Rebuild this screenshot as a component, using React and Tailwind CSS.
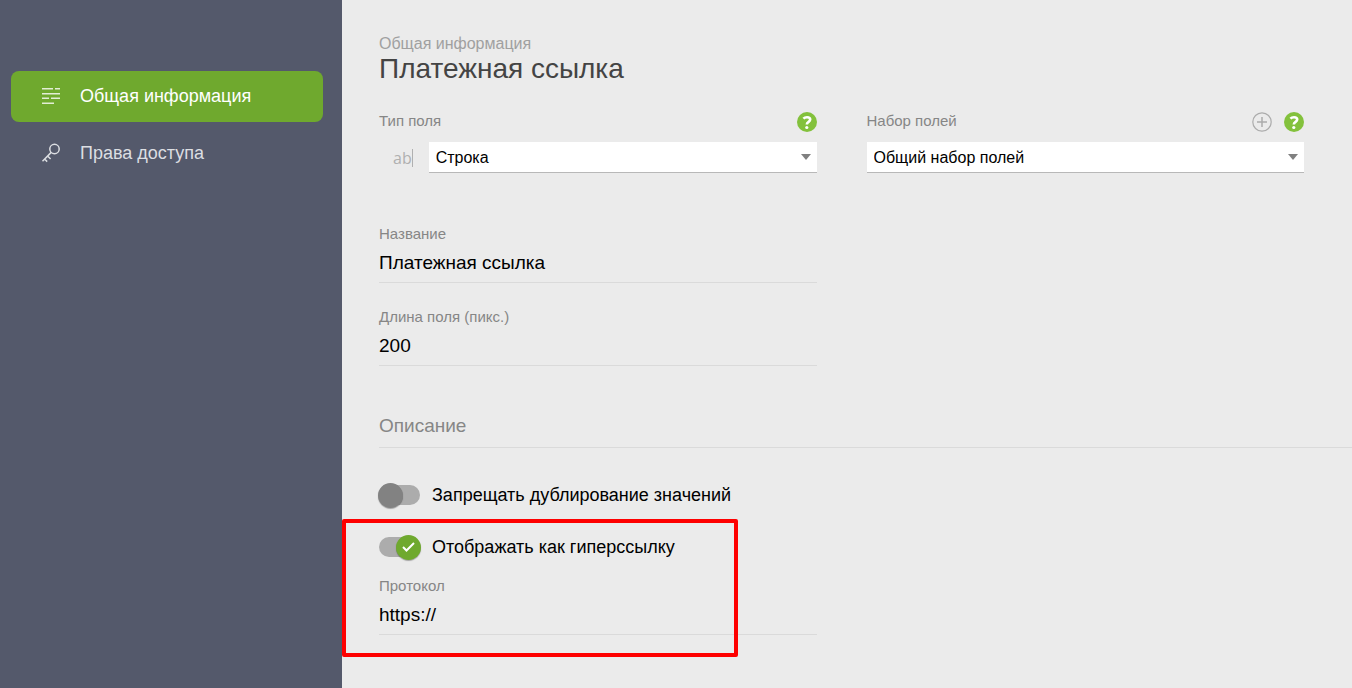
import { useState } from 'react';

const navItems = [
  { id: 'general', label: 'Общая информация', icon: LinesIcon },
  { id: 'access', label: 'Права доступа', icon: KeyIcon },
];

function LinesIcon() {
  return (
    <svg width="20" height="20" viewBox="0 0 20 20" fill="none" stroke="currentColor" strokeWidth="1.5" strokeOpacity="0.8" className="shrink-0">
      <path d="M1 2.7h11M14 2.7h5M1 7.7h18M1 12.2h7M10 12.2h9M1 17.2h12" />
    </svg>
  );
}

function KeyIcon() {
  return (
    <svg width="20" height="20" viewBox="0 0 20 20" fill="none" stroke="currentColor" strokeWidth="1.5" className="shrink-0">
      <circle cx="13.5" cy="6" r="4.7" />
      <path d="M10.2 9.4L1.5 18.2M6.6 13l3 3M3.6 16l2.6 2.6" />
    </svg>
  );
}

function HelpButton({ label }) {
  return (
    <button type="button" aria-label={label} className="size-5 rounded-full bg-[#83c13c]">
      <svg width="20" height="20" viewBox="0 0 20 20" fill="none" stroke="#fff" strokeWidth="2.6">
        <path d="M6.4 6.6C7.2 5.8 8.5 5.3 10 5.3c2 0 3.200.8 3.200 2.300 0 2.400-3.400 2.200-3.400 5" />
        <circle cx="9.800" cy="15.500" r="1.600" fill="#fff" stroke="none" />
      </svg>
    </button>
  );
}

function Select({ id, options }) {
  return (
    <div className="relative flex-1">
      <select
        id={id}
        className="block w-full h-[31px] appearance-none rounded-none border-b border-[#b8b8b8] bg-white pl-[7px] pr-7 pt-0.5 text-base text-black outline-none"
      >
        {options.map(o => <option key={o}>{o}</option>)}
      </select>
      <svg width="10" height="6" viewBox="0 0 10 6" className="pointer-events-none absolute right-[6px] top-3">
        <path d="M0 0h10L5 6z" fill="#808080" />
      </svg>
    </div>
  );
}

function TextField({ id, label, defaultValue }) {
  return (
    <div>
      <label htmlFor={id} className="block text-[15px] leading-5 text-[#868686]">{label}</label>
      <input
        id={id}
        type="text"
        defaultValue={defaultValue}
        className="block w-full h-[39px] border-b border-[#dadada] bg-transparent text-[19px] text-black outline-none"
      />
    </div>
  );
}

function Toggle({ label, defaultChecked = false }) {
  const [on, setOn] = useState(defaultChecked);

  return (
    <label className="flex h-[26px] items-center gap-3 text-lg leading-6 text-black">
      <span className="relative flex h-5 w-[41px] items-center rounded-full bg-[#acacac]">
        <input
          type="checkbox"
          role="switch"
          checked={on}
          onChange={e => setOn(e.target.checked)}
          className="absolute inset-0 appearance-none"
        />
        <span
          className={
            on
              ? 'pointer-events-none absolute -right-px flex size-[25px] items-center justify-center rounded-full bg-[#6fa92e] shadow-[0_1px_1px_rgba(0,0,0,0.3)]'
              : 'pointer-events-none absolute -left-px size-[25px] rounded-full bg-[#828282] shadow-[0_1px_1px_rgba(0,0,0,0.3)]'
          }
        >
          {on && (
            <svg width="14" height="12" viewBox="0 0 14 12" fill="none" stroke="#fff" strokeWidth="2">
              <path d="M1 6l3.500 3.500L12 2" />
            </svg>
          )}
        </span>
      </span>
      {label}
    </label>
  );
}

export default function App() {
  const [active, setActive] = useState('general');

  return (
    <div className="flex min-h-screen bg-[#ebebeb] font-['Liberation_Sans',Arial,sans-serif]">
      {/* Sidebar */}
      <aside className="w-[342px] shrink-0 bg-[#54596b] pl-[11px] pr-[19px] pt-[71px]">
        <nav className="flex flex-col gap-[6px]">
          {navItems.map(({ id, label, icon: Icon }) => (
            <button
              key={id}
              type="button"
              onClick={() => setActive(id)}
              className={`flex h-[51px] items-center gap-[19px] rounded-lg pb-0.5 pl-[30px] text-left text-lg ${
                active === id ? 'bg-[#6fa92e] text-white' : 'text-[#dcdee2]'
              }`}
            >
              <Icon />
              {label}
            </button>
          ))}
        </nav>
      </aside>

      {/* Field settings */}
      <main className="min-w-0 flex-1 pl-[37px] pt-[34px]">
        <header>
          <p className="text-base leading-5 text-[#a0a0a0]">Общая информация</p>
          <h1 className="text-[28px] leading-[30px] text-[#444]">Платежная ссылка</h1>
        </header>

        <div className="mr-12 mt-7 grid grid-cols-2 gap-x-[50px]">
          <div>
            <div className="flex items-start justify-between">
              <label htmlFor="type" className="text-[15px] leading-[18px] text-[#868686]">Тип поля</label>
              <HelpButton label="Справка: тип поля" />
            </div>
            <div className="mt-[10px] flex items-center">
              <span
                className="ml-[14px] mr-4 shrink-0 border-r border-[#b0b0b0] font-['Open_Sans',sans-serif] text-base leading-[18px] text-[#b0b0b0]"
                aria-hidden="true"
              >
                ab
              </span>
              <Select id="type" options={['Строка', 'Число', 'Дата']} />
            </div>
          </div>

          <div>
            <div className="flex items-start">
              <label htmlFor="set" className="mr-auto text-[15px] leading-[18px] text-[#868686]">Набор полей</label>
              <button type="button" aria-label="Добавить набор" className="mr-3 text-[#acacac]">
                <svg width="20" height="20" viewBox="0 0 20 20" fill="none" stroke="currentColor" strokeWidth="1.200">
                  <circle cx="10" cy="10" r="9.200" />
                  <path d="M10 5v10M5 10h10" strokeWidth="1.500" />
                </svg>
              </button>
              <HelpButton label="Справка: набор полей" />
            </div>
            <div className="mt-[10px] flex">
              <Select id="set" options={['Общий набор полей']} />
            </div>
          </div>

          <div className="mt-[51px] flex flex-col gap-6">
            <TextField id="name" label="Название" defaultValue="Платежная ссылка" />
            <TextField id="length" label="Длина поля (пикс.)" defaultValue="200" />
          </div>
        </div>

        <h2 className="mt-12 border-b border-[#dadada] pb-[9px] text-[19px] leading-6 text-[#868686]">Описание</h2>

        <div className="mt-[34px] flex flex-col gap-[26px]">
          <Toggle label="Запрещать дублирование значений" />

          <div className="relative">
            <Toggle label="Отображать как гиперссылку" defaultChecked />
            <div className="mr-12 mt-4 grid grid-cols-2 gap-x-[50px]">
              <TextField id="protocol" label="Протокол" defaultValue="https://" />
            </div>
            <div className="pointer-events-none absolute -bottom-[22px] -left-[37px] -top-[15px] w-[396px] rounded-xs border-4 border-[#fe0000]" />
          </div>
        </div>
      </main>
    </div>
  );
}
